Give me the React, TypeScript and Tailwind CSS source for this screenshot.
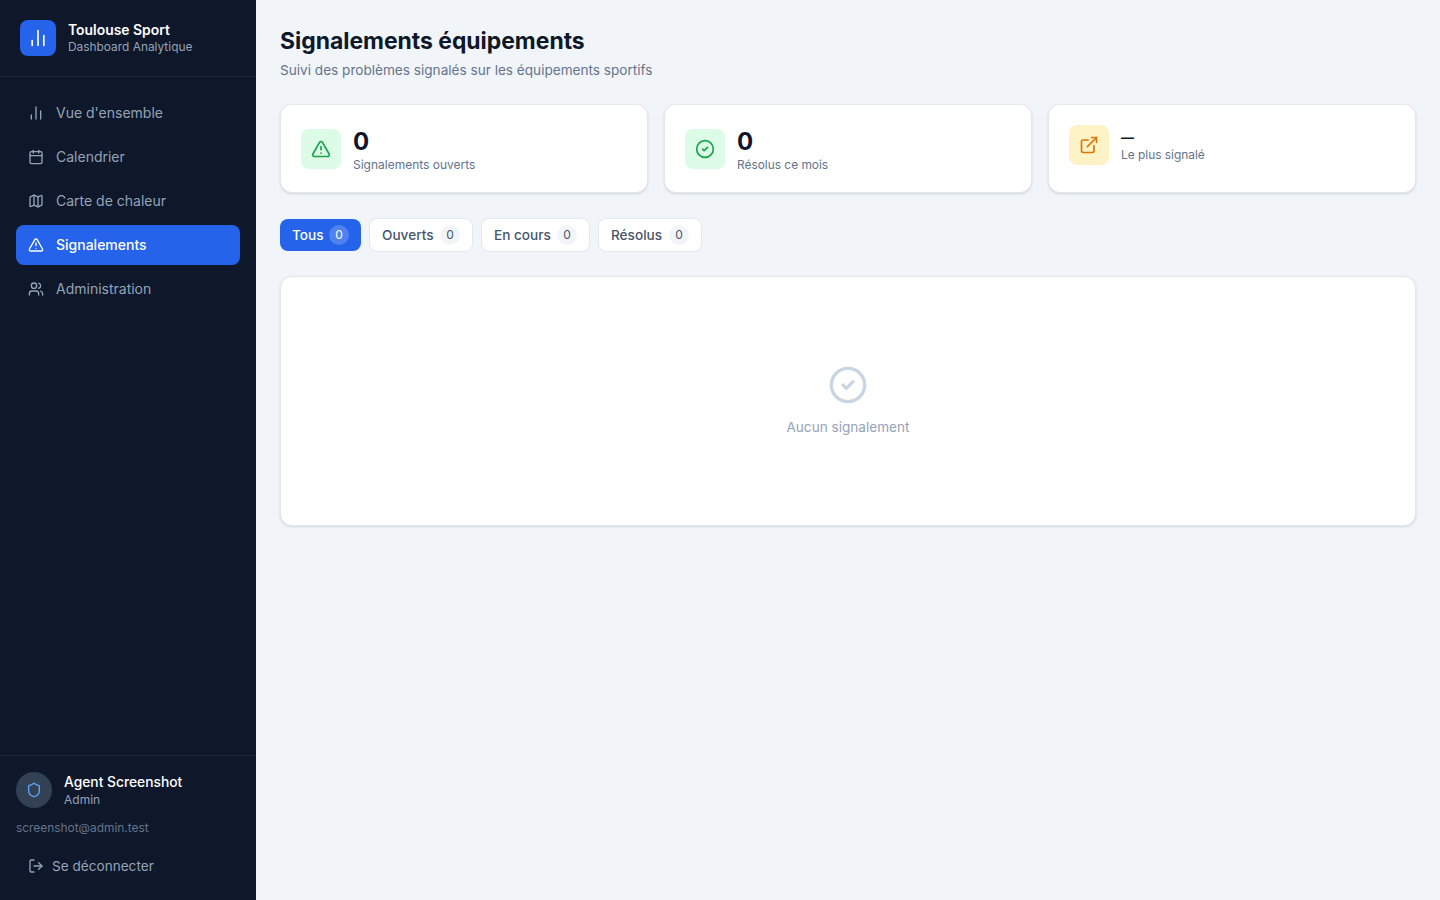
import { ChartNoAxesColumn, Calendar, Map, TriangleAlert, Users, Shield, LogOut, CircleCheck, ExternalLink } from "lucide-react";

const nav = [
  { label: "Vue d'ensemble", Icon: ChartNoAxesColumn },
  { label: "Calendrier", Icon: Calendar },
  { label: "Carte de chaleur", Icon: Map },
  { label: "Signalements", Icon: TriangleAlert, active: true },
  { label: "Administration", Icon: Users },
];

const filters = [
  { label: "Tous", active: true, cls: "w-[81px]" },
  { label: "Ouverts", cls: "w-[104px]" },
  { label: "En cours", cls: "w-[109px]" },
  { label: "Résolus", cls: "w-[104px]" },
];

export default function App() {
  return (
    <div className="flex h-[900px] w-full overflow-hidden bg-[#f1f5f9] font-['Inter',sans-serif]">
      <aside className="flex w-64 shrink-0 flex-col bg-[#0f172a]">
        <div className="flex items-center gap-3 border-b border-[#1e293b] p-5">
          <div className="flex h-9 w-9 items-center justify-center rounded-lg bg-[#2563eb] text-white">
            <ChartNoAxesColumn size={20} />
          </div>
          <div className="pb-0.5">
            <div className="text-[13.9px] leading-[18px] font-semibold text-white">Toulouse Sport</div>
            <div className="text-[11.9px] leading-[15px] text-[#94a3b8]">Dashboard Analytique</div>
          </div>
        </div>
        <nav className="flex flex-1 flex-col gap-1 p-4">
          {nav.map(({ label, Icon, active }) => (
            <div
              key={label}
              className={
                active
                  ? "flex h-10 items-center gap-3 rounded-lg bg-[#2563eb] px-3 text-sm font-medium text-white"
                  : "flex h-10 items-center gap-3 rounded-lg px-3 text-sm font-normal text-[#94a3b8]"
              }
            >
              <Icon size={16} />
              {label}
            </div>
          ))}
        </nav>
        <div className="border-t border-[#1e293b] p-4">
          <div className="flex items-center gap-3">
            <div className="flex h-9 w-9 items-center justify-center rounded-full bg-[#334155] text-[#60a5fa]">
              <Shield size={16} />
            </div>
            <div>
              <div className="text-[13.8px] leading-[19px] font-medium text-white">Agent Screenshot</div>
              <div className="text-xs leading-[15px] text-[#94a3b8]">Admin</div>
            </div>
          </div>
          <div className="mt-3 text-[11.9px] leading-4 text-[#64748b]">screenshot@admin.test</div>
          <div className="mt-3 flex h-9 items-center gap-2 px-3 text-[13.6px] text-[#94a3b8]">
            <LogOut size={16} />
            Se déconnecter
          </div>
        </div>
      </aside>
      <main className="flex-1 p-6">
        <h1 className="text-[22.9px] leading-[34px] font-bold text-[#0f172a]">Signalements équipements</h1>
        <p className="mt-0.5 text-[13.6px] leading-5 text-[#64748b]">Suivi des problèmes signalés sur les équipements sportifs</p>

        <div className="mt-6 grid grid-cols-3 gap-4">
          <div className="rounded-xl border border-[#e2e8f0] bg-white p-5 shadow-sm">
            <div className="flex items-center gap-3">
              <div className="flex h-10 w-10 items-center justify-center rounded-lg bg-[#dcfce7] text-[#16a34a]">
                <TriangleAlert size={20} />
              </div>
              <div>
                <div className="pt-px text-2xl leading-8 font-bold text-[#0f172a]">0</div>
                <div className="text-xs leading-[14px] text-[#64748b]">Signalements ouverts</div>
              </div>
            </div>
          </div>
          <div className="rounded-xl border border-[#e2e8f0] bg-white p-5 shadow-sm">
            <div className="flex items-center gap-3">
              <div className="flex h-10 w-10 items-center justify-center rounded-lg bg-[#dcfce7] text-[#16a34a]">
                <CircleCheck size={20} />
              </div>
              <div>
                <div className="pt-px text-2xl leading-8 font-bold text-[#0f172a]">0</div>
                <div className="text-[11.9px] leading-[14px] text-[#64748b]">Résolus ce mois</div>
              </div>
            </div>
          </div>
          <div className="rounded-xl border border-[#e2e8f0] bg-white p-5 shadow-sm">
            <div className="flex items-center gap-3">
              <div className="flex h-10 w-10 items-center justify-center rounded-lg bg-[#fef3c7] text-[#d97706]">
                <ExternalLink size={20} />
              </div>
              <div>
                <div className="text-[13px] leading-[19px] font-bold text-[#0f172a]">—</div>
                <div className="text-[11.9px] leading-[15px] text-[#64748b]">Le plus signalé</div>
              </div>
            </div>
          </div>
        </div>

        <div className="mt-[25px] flex items-center gap-2">
          {filters.map((f) => (
            <div
              key={f.label}
              className={
                f.active
                  ? `flex h-8 items-center justify-between rounded-lg bg-[#2563eb] px-3 text-[13.6px] font-medium text-white ${f.cls}`
                  : `flex h-[34px] items-center justify-between rounded-lg border border-[#e2e8f0] bg-white px-3 text-[13.6px] font-medium text-[#475569] ${f.cls}`
              }
            >
              {f.label}
              <span
                className={
                  f.active
                    ? "flex h-5 w-5 items-center justify-center rounded-full bg-white/20 text-xs font-normal"
                    : "flex h-5 w-5 items-center justify-center rounded-full bg-[#f1f5f9] text-xs font-normal"
                }
              >
                0
              </span>
            </div>
          ))}
        </div>

        <div className="mt-6 flex h-[250px] flex-col items-center rounded-xl border border-[#e2e8f0] bg-white pt-[88px] shadow-sm">
          <CircleCheck size={40} className="text-[#cbd5e1]" />
          <div className="mt-3 text-[13.6px] leading-5 text-[#94a3b8]">Aucun signalement</div>
        </div>
      </main>
    </div>
  );
}
